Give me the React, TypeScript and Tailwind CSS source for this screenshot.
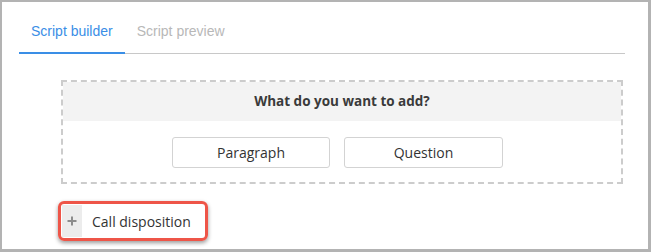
export default function App() {
  return (
    <div className="w-[651px] h-[252px] bg-white border-t-2 border-l-2 border-r-[3px] border-b-[3px] border-[#b3b3b3] overflow-hidden">
      {/* tabs */}
      <div className="ml-[17px] w-[606px] flex border-b border-[#c8c8c8] font-['Liberation_Sans',Arial,sans-serif] text-[14px] leading-[18px]">
        <div className="-mb-px px-3 pt-[20px] pb-[12px] border-b-2 border-[#3a8ee6] text-[#3a8ee6]">Script builder</div>
        <div className="px-3 pt-[20px] pb-[12px] text-[#b8b8b8]">Script preview</div>
      </div>

      <div className="font-['Open_Sans',sans-serif] text-[#333]">
        {/* add block */}
        <div className="ml-[59px] mt-[26px] w-[562px] border-2 border-dashed border-[#cccccc]">
          <div className="h-[39px] bg-[#f3f3f3] flex items-center justify-center text-[13.5px] font-bold text-[#3a3a3a]">
            What do you want to add?
          </div>
          <div className="flex justify-center gap-[14px] pt-[16px] pb-[14px] pr-[9px]">
            <button className="w-[158px] h-[31px] rounded-[3px] border border-[#d3d3d3] bg-white text-[14px] text-[#333]">
              Paragraph
            </button>
            <button className="w-[159px] h-[31px] rounded-[3px] border border-[#d3d3d3] bg-white text-[14px] text-[#333]">
              Question
            </button>
          </div>
        </div>

        {/* call disposition */}
        <div className="ml-[56px] mt-[17px] inline-flex rounded-[6px] border-[3px] border-[#ee5548] p-px shadow-[0_2px_4px_rgba(0,0,0,0.4)]">
          <div className="flex h-[32px] items-stretch bg-white">
            <div className="w-[20px] bg-[#ececec] flex items-center justify-center">
              <svg width="10" height="10" viewBox="0 0 10 10">
                <path d="M5 0.5v9M0.5 5h9" stroke="#8c8c8c" strokeWidth="2" />
              </svg>
            </div>
            <div className="flex items-center pl-[10px] pr-[13px] text-[14px] text-[#333]">Call disposition</div>
          </div>
        </div>
      </div>
    </div>
  );
}
